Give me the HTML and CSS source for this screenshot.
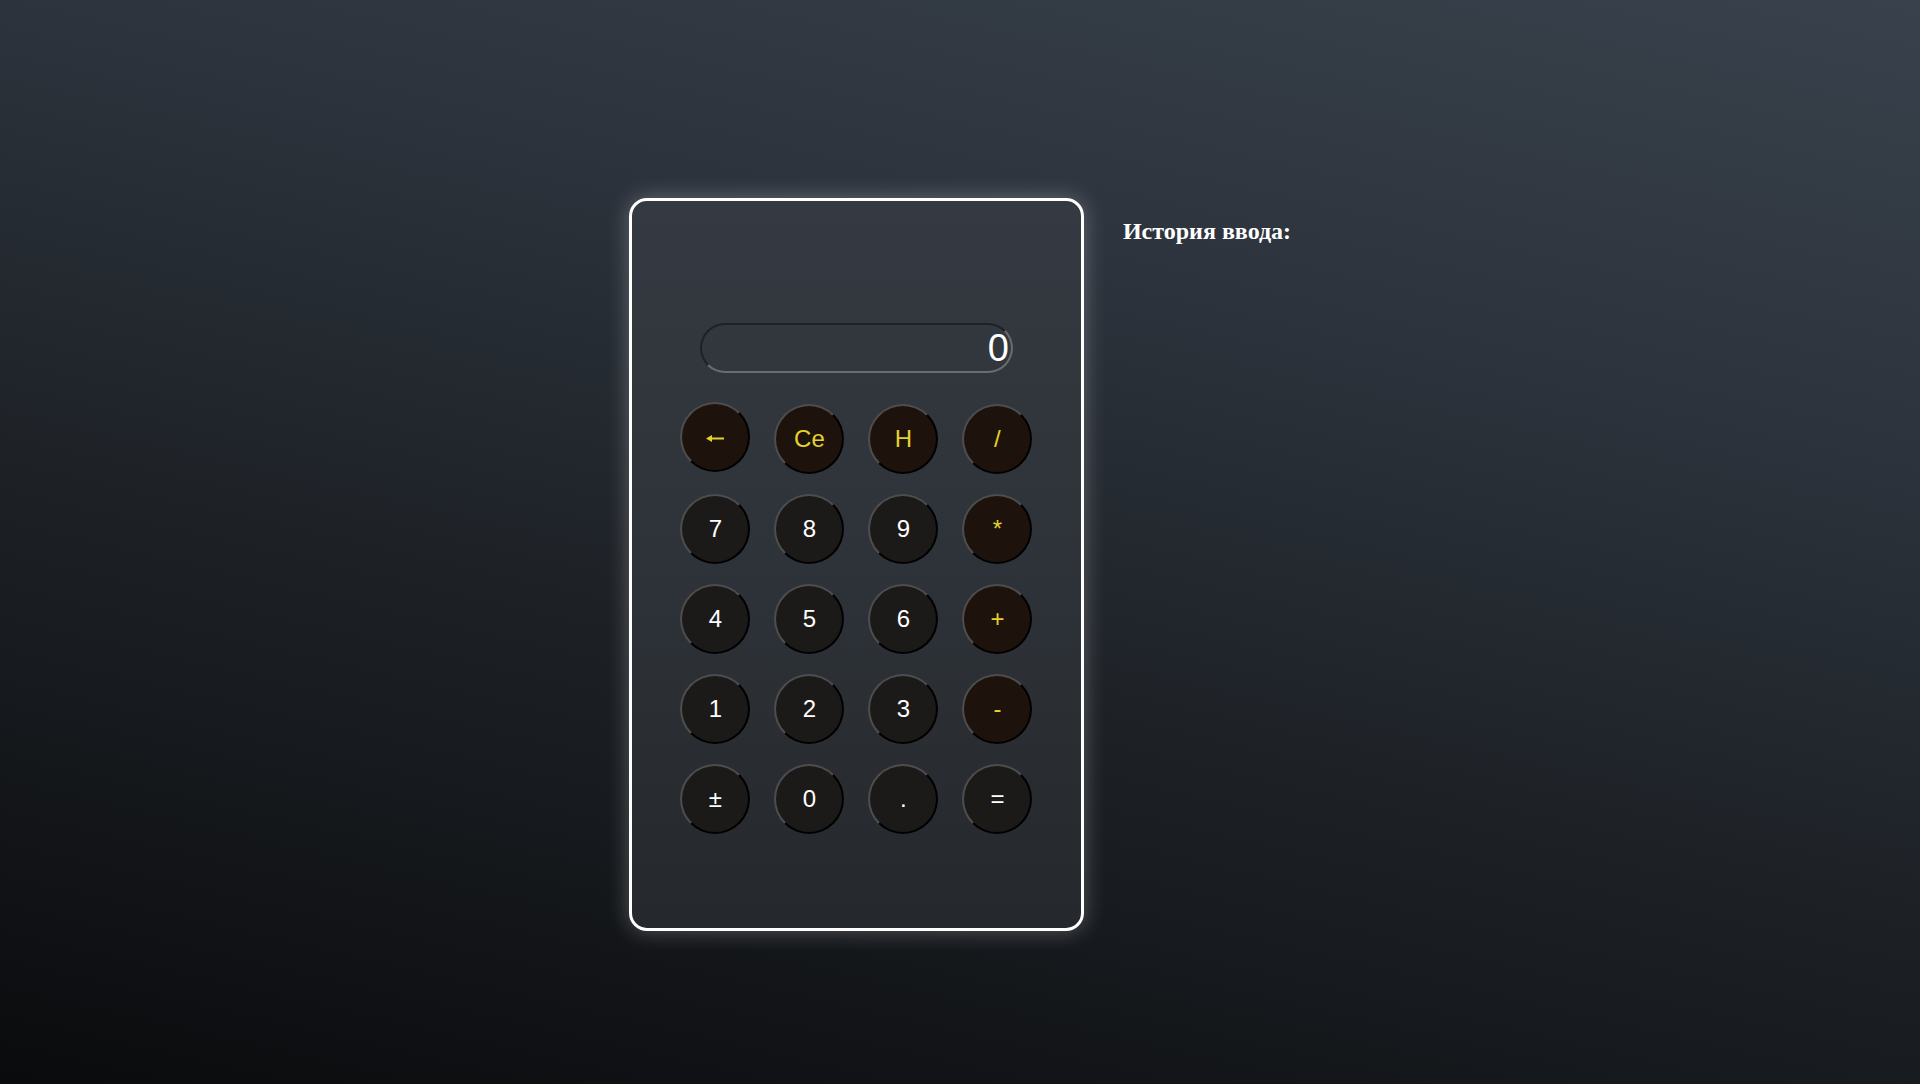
FILE: index.html
```html
<!DOCTYPE html>
<html lang="ru">
<head>
<meta charset="utf-8">
<title>Калькулятор</title>
<link rel="stylesheet" href="styles.css">
</head>
<body>
<main class="page">
  <section class="calc">
    <div class="display">0</div>
    <div class="keys">
      <button class="key op back" aria-label="←"><svg class="arrow" width="18" height="7" viewBox="0 0 18 7"><path d="M0 3.5 L6 0 L6 2.5 L18 2.5 L18 4.5 L6 4.5 L6 7 Z" fill="#e3d12d"/></svg></button>
      <button class="key op">Ce</button>
      <button class="key op">H</button>
      <button class="key op">/</button>
      <button class="key">7</button>
      <button class="key">8</button>
      <button class="key">9</button>
      <button class="key op">*</button>
      <button class="key">4</button>
      <button class="key">5</button>
      <button class="key">6</button>
      <button class="key op">+</button>
      <button class="key">1</button>
      <button class="key">2</button>
      <button class="key">3</button>
      <button class="key op">-</button>
      <button class="key">±</button>
      <button class="key">0</button>
      <button class="key">.</button>
      <button class="key">=</button>
    </div>
  </section>
  <aside class="history">
    <h2 class="history-title">История ввода:</h2>
  </aside>
</main>
</body>
</html>
```

FILE: styles.css
```css
html, body {
  margin: 0;
  padding: 0;
  height: 100%;
}
body {
  background: linear-gradient(13deg, #0a0b0d 0%, #1d2126 40%, #2c333c 70%, #39414c 100%);
  color: #fff;
  font-family: "Liberation Sans", Arial, sans-serif;
  overflow: hidden;
}
.page {
  display: flex;
  justify-content: center;
  align-items: flex-start;
  gap: 39px;
  padding-top: 198px;
  box-sizing: border-box;
  height: 100%;
}
.calc {
  width: 455px;
  height: 733px;
  box-sizing: border-box;
  border: 3px solid #fff;
  border-radius: 18px;
  background: linear-gradient(to bottom, #353a42 0%, #2e3339 50%, #25282c 100%);
  box-shadow: 0 0 22px rgba(255, 255, 255, 0.28);
  display: flex;
  flex-direction: column;
  align-items: center;
  padding-top: 122px;
}
.display {
  width: 313px;
  height: 50px;
  box-sizing: border-box;
  border: 2px solid;
  border-color: #1e2023 #6b6c6e #6b6c6e #1e2023;
  border-radius: 25px;
  text-align: right;
  font-size: 38px;
  line-height: 46px;
  padding-right: 2px;
  color: #fff;
}
.keys {
  margin-top: 31px;
  display: grid;
  grid-template-columns: repeat(4, 70px);
  grid-auto-rows: 70px;
  column-gap: 24px;
  row-gap: 20px;
}
.key {
  width: 70px;
  height: 70px;
  box-sizing: border-box;
  border-radius: 50%;
  border: 2px solid;
  border-color: #4d4d4d #000 #000 #4d4d4d;
  background: #1c1a19;
  color: #fff;
  font-family: "Liberation Sans", Arial, sans-serif;
  font-size: 24px;
  padding: 0;
  cursor: pointer;
  display: flex;
  align-items: center;
  justify-content: center;
}
.key.op {
  background: #1e130c;
  color: #e3d12d;
}
.key.back {
  margin-top: -2px;
}
.arrow {
  display: block;
  margin-top: 2px;
}
.history {
  color: #fff;
}
.history-title {
  margin: 20px 0 0;
  font-family: "Liberation Serif", "Times New Roman", serif;
  font-weight: bold;
  font-size: 24px;
}
```
